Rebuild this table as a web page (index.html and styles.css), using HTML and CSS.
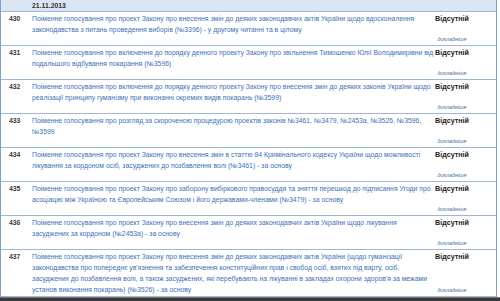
FILE: index.html
```html
<!DOCTYPE html>
<html lang="uk">
<head>
<meta charset="utf-8">
<title>Поіменні голосування</title>
<link rel="stylesheet" href="styles.css">
</head>
<body>
<div class="page">
  <div class="table">
    <div class="head"><span class="date">21.11.2013</span></div>

    <div class="row">
      <div class="num">430</div>
      <div class="text">Поіменне голосування про проект Закону про внесення змін до деяких законодавчих актів України щодо вдосконалення<br>законодавства з питань проведення виборів (№3396) - у другому читанні та в цілому</div>
      <div class="status"><span class="absent">Відсутній</span><span class="more">докладніше</span></div>
    </div>

    <div class="row">
      <div class="num">431</div>
      <div class="text">Поіменне голосування про включення до порядку денного проекту Закону про звільнення Тимошенко Юлії Володимирівни від<br>подальшого відбування покарання (№3596)</div>
      <div class="status"><span class="absent">Відсутній</span><span class="more">докладніше</span></div>
    </div>

    <div class="row">
      <div class="num">432</div>
      <div class="text">Поіменне голосування про включення до порядку денного проекту Закону про внесення змін до деяких законів України щодо<br>реалізації принципу гуманізму при виконанні окремих видів покарань (№3599)</div>
      <div class="status"><span class="absent">Відсутній</span><span class="more">докладніше</span></div>
    </div>

    <div class="row">
      <div class="num">433</div>
      <div class="text">Поіменне голосування про розгляд за скороченою процедурою проектів законів №3461, №3479, №2453а, №3526, №3596,<br>№3599</div>
      <div class="status"><span class="absent">Відсутній</span><span class="more">докладніше</span></div>
    </div>

    <div class="row">
      <div class="num">434</div>
      <div class="text">Поіменне голосування про проект Закону про внесення змін в статтю 84 Кримінального кодексу України щодо можливості<br>лікування за кордоном осіб, засуджених до позбавлення волі (№3461) - за основу</div>
      <div class="status"><span class="absent">Відсутній</span><span class="more">докладніше</span></div>
    </div>

    <div class="row">
      <div class="num">435</div>
      <div class="text">Поіменне голосування про проект Закону про заборону вибіркового правосуддя та зняття перешкод до підписання Угоди про<br>асоціацію між Україною та Європейським Союзом і його державами-членами (№3479) - за основу</div>
      <div class="status"><span class="absent">Відсутній</span><span class="more">докладніше</span></div>
    </div>

    <div class="row">
      <div class="num">436</div>
      <div class="text">Поіменне голосування про проект Закону про внесення змін до деяких законодавчих актів України щодо лікування<br>засуджених за кордоном (№2453а) - за основу</div>
      <div class="status"><span class="absent">Відсутній</span><span class="more">докладніше</span></div>
    </div>

    <div class="row">
      <div class="num">437</div>
      <div class="text">Поіменне голосування про проект Закону про внесення змін до деяких законодавчих актів України (щодо гуманізації<br>законодавства про попереднє ув'язнення та забезпечення конституційних прав і свобод осіб, взятих під варту, осіб,<br>засуджених до позбавлення волі, а також засуджених, які перебувають на лікуванні в закладах охорони здоров'я за межами<br>установ виконання покарань) (№3526) - за основу</div>
      <div class="status"><span class="absent">Відсутній</span><span class="more">докладніше</span></div>
    </div>
  </div>
  <div class="bar"></div>
</div>
</body>
</html>
```

FILE: styles.css
```css
html, body {
  margin: 0;
  padding: 0;
  background: #ffffff;
}

.page {
  width: 500px;
  height: 301px;
  display: flex;
  flex-direction: column;
  overflow: hidden;
  font-family: "Liberation Sans", Arial, sans-serif;
  font-size: 6.85px;
  line-height: 11px;
}

.table {
  flex: 1;
  min-height: 0;
  overflow: hidden;
  width: 495px;
  border-left: 1px solid #7f9fca;
  border-right: 1px solid #7f9fca;
}

.head {
  height: 12px;
  background: #dce6f2;
  border-bottom: 1px solid #9fb7d6;
  padding-left: 31px;
  box-sizing: border-box;
}

.date {
  font-weight: bold;
  color: #333333;
  line-height: 11px;
}

.row {
  display: grid;
  grid-template-columns: 31px minmax(0, 1fr) 62px;
  padding-right: 13px;
  min-height: 33px;
  border-bottom: 1px solid #9fb7d6;
}

.num {
  padding: 1px 0 0 8px;
  font-weight: bold;
  color: #3a3a3a;
}

.text {
  padding: 1px 0;
  color: #3c70b8;
  white-space: nowrap;
}

.status {
  display: flex;
  flex-direction: column;
  align-items: center;
  justify-content: space-between;
  padding-top: 1px;
}

.absent {
  font-weight: bold;
  font-size: 7.2px;
  color: #222222;
}

.more {
  font-size: 5.4px;
  line-height: 7px;
  margin-bottom: 2px;
  color: #4a72aa;
  font-style: italic;
}

.bar {
  height: 4px;
  flex: none;
  background: #3a3a3a;
  border-top: 1px solid #777777;
  box-sizing: border-box;
}
```
